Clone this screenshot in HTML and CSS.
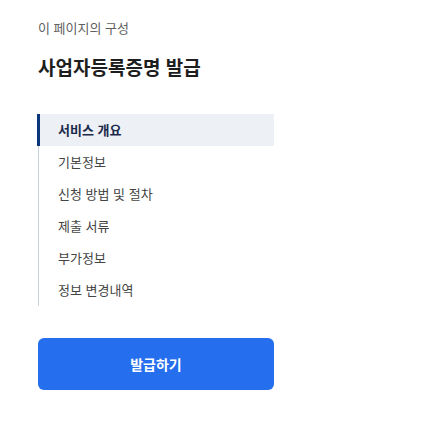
FILE: index.html
```html
<!DOCTYPE html>
<html lang="ko">
<head>
<meta charset="utf-8">
<title>사업자등록증명 발급</title>
<link rel="stylesheet" href="styles.css">
</head>
<body>
<aside class="toc">
  <p class="toc-label">이 페이지의 구성</p>
  <h2 class="toc-title">사업자등록증명 발급</h2>
  <nav class="toc-nav">
    <a class="toc-item is-active" href="#">서비스 개요</a>
    <a class="toc-item" href="#">기본정보</a>
    <a class="toc-item" href="#">신청 방법 및 절차</a>
    <a class="toc-item" href="#">제출 서류</a>
    <a class="toc-item" href="#">부가정보</a>
    <a class="toc-item" href="#">정보 변경내역</a>
  </nav>
  <button class="toc-button" type="button">발급하기</button>
</aside>
</body>
</html>
```

FILE: styles.css
```css
html, body {
  margin: 0;
  padding: 0;
  background: #ffffff;
}

body {
  font-family: "Noto Sans CJK KR", "Noto Sans", sans-serif;
}

.toc {
  width: 236px;
  padding: 19px 0 0 38px;
  display: flex;
  flex-direction: column;
}

.toc-label {
  margin: 0;
  font-size: 13px;
  line-height: 18px;
  color: #5f5f5f;
}

.toc-title {
  margin: 17px 0 0;
  font-size: 19px;
  line-height: 26px;
  font-weight: 700;
  color: #1e1e1e;
}

.toc-nav {
  margin-top: 34px;
  border-left: 1px solid #c9d2de;
  display: flex;
  flex-direction: column;
}

.toc-item {
  display: block;
  height: 32px;
  line-height: 32px;
  padding-left: 19px;
  font-size: 13px;
  color: #444444;
  text-decoration: none;
}

.toc-item.is-active {
  margin-left: -2px;
  padding-left: 18px;
  border-left: 3px solid #0b367a;
  background: #edf0f5;
  color: #1b2a4a;
  font-weight: 700;
}

.toc-button {
  margin-top: 32px;
  width: 236px;
  height: 52px;
  border: 0;
  border-radius: 6px;
  background: #256eee;
  color: #ffffff;
  font-family: inherit;
  font-size: 14px;
  font-weight: 700;
  cursor: pointer;
}
```
